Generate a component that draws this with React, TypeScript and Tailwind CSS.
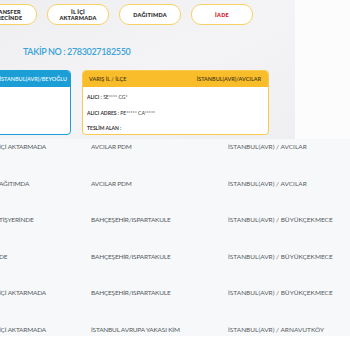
const buttons = [
  { label: ["TRANSFER", "SÜRECİNDE"], red: false },
  { label: ["İL İÇİ", "AKTARMADA"], red: false },
  { label: ["DAĞITIMDA"], red: false },
  { label: ["İADE"], red: true },
];

const rows = [
  { status: "İÇİ AKTARMADA", unit: "AVCILAR PDM", place: "İSTANBUL(AVR) / AVCILAR" },
  { status: "AĞITIMDA", unit: "AVCILAR PDM", place: "İSTANBUL(AVR) / AVCILAR" },
  { status: "TİŞYERİNDE", unit: "BAHÇEŞEHİR/ISPARTAKULE", place: "İSTANBUL(AVR) / BÜYÜKÇEKMECE" },
  { status: "DE", unit: "BAHÇEŞEHİR/ISPARTAKULE", place: "İSTANBUL(AVR) / BÜYÜKÇEKMECE" },
  { status: "İÇİ AKTARMADA", unit: "BAHÇEŞEHİR/ISPARTAKULE", place: "İSTANBUL(AVR) / BÜYÜKÇEKMECE" },
  { status: "İÇİ AKTARMADA", unit: "İSTANBUL AVRUPA YAKASI KİM", place: "İSTANBUL(AVR) / ARNAVUTKÖY" },
];

export default function App() {
  return (
    <div
      className="w-[350px] h-[350px] overflow-hidden bg-white"
      style={{ fontFamily: "Lato, 'Open Sans', sans-serif" }}
    >
      <div className="flex h-[139px]">
        <div className="w-[295px] shrink-0 bg-gradient-to-br from-[#eeeef0] via-[#f4f4f6] to-[#efeff1] flex flex-col overflow-hidden">
          <div className="flex gap-[10px] -ml-[25px] mt-[4px]">
            {buttons.map((b, i) => (
              <div
                key={i}
                className="w-[62px] h-[21px] shrink-0 rounded-[10px] border-[1.5px] border-[#f6d266] bg-white flex flex-col items-center justify-center"
              >
                {b.label.map((l) => (
                  <span
                    key={l}
                    className={
                      "text-[5.5px] leading-[6px] font-extrabold tracking-[0.2px] " +
                      (b.red ? "text-[#d0222c]" : "text-[#333333]")
                    }
                  >
                    {l}
                  </span>
                ))}
              </div>
            ))}
          </div>

          <div className="mt-[21px] pl-[23px] text-[9px] leading-[12px] text-[#3ba3d9] font-semibold tracking-[-0.35px]">
            TAKİP NO : 2783027182550
          </div>

          <div className="flex gap-[11px] -ml-[29px] mt-[12px]">
            <div className="w-[100px] h-[65px] shrink-0 rounded-[4px] border-[1.5px] border-[#1b9ed6] bg-white overflow-hidden">
              <div className="h-[16px] bg-[#1b9ed6] flex items-center justify-end pr-[3px] text-[5.5px] text-[#e8f6fc] font-semibold">
                İSTANBUL(AVR)/BEYOĞLU
              </div>
            </div>
            <div className="w-[187px] h-[65px] shrink-0 rounded-[4px] border-[1.5px] border-[#f7cb4e] bg-white overflow-hidden">
              <div className="h-[16px] bg-[#f9bd2c] flex items-center justify-between pl-[6px] pr-[7px] text-[5.5px] text-[#4a3a12] font-semibold">
                <span>VARIŞ İL / İLÇE</span>
                <span>İSTANBUL(AVR)/AVCILAR</span>
              </div>
              <div className="flex flex-col gap-[9.5px] pl-[4px] pt-[7px] text-[5px] leading-[6px] text-[#333333]">
                <span>
                  <b className="font-bold">ALICI :</b> SE**** CG*
                </span>
                <span>
                  <b className="font-bold">ALICI ADRES :</b> PE***** CA*****
                </span>
                <span>
                  <b className="font-bold">TESLİM ALAN :</b>
                </span>
              </div>
            </div>
          </div>
        </div>
        <div className="flex-1 bg-[#fcfcfd]" />
      </div>

      <div className="h-[197px] overflow-hidden bg-[#f7f8fa]">
        {rows.map((r, i) => (
          <div
            key={i}
            className="h-[36.6px] flex items-start pt-[4px] text-[6.5px] leading-[7px] text-[#555a60]"
          >
            <span className="w-[91px] shrink-0 -ml-[1px] whitespace-nowrap tracking-[-0.2px]">{r.status}</span>
            <span className="w-[138px] shrink-0 pl-[1px] whitespace-nowrap overflow-hidden tracking-[-0.2px]">{r.unit}</span>
            <span className="whitespace-nowrap">{r.place}</span>
          </div>
        ))}
      </div>
    </div>
  );
}
